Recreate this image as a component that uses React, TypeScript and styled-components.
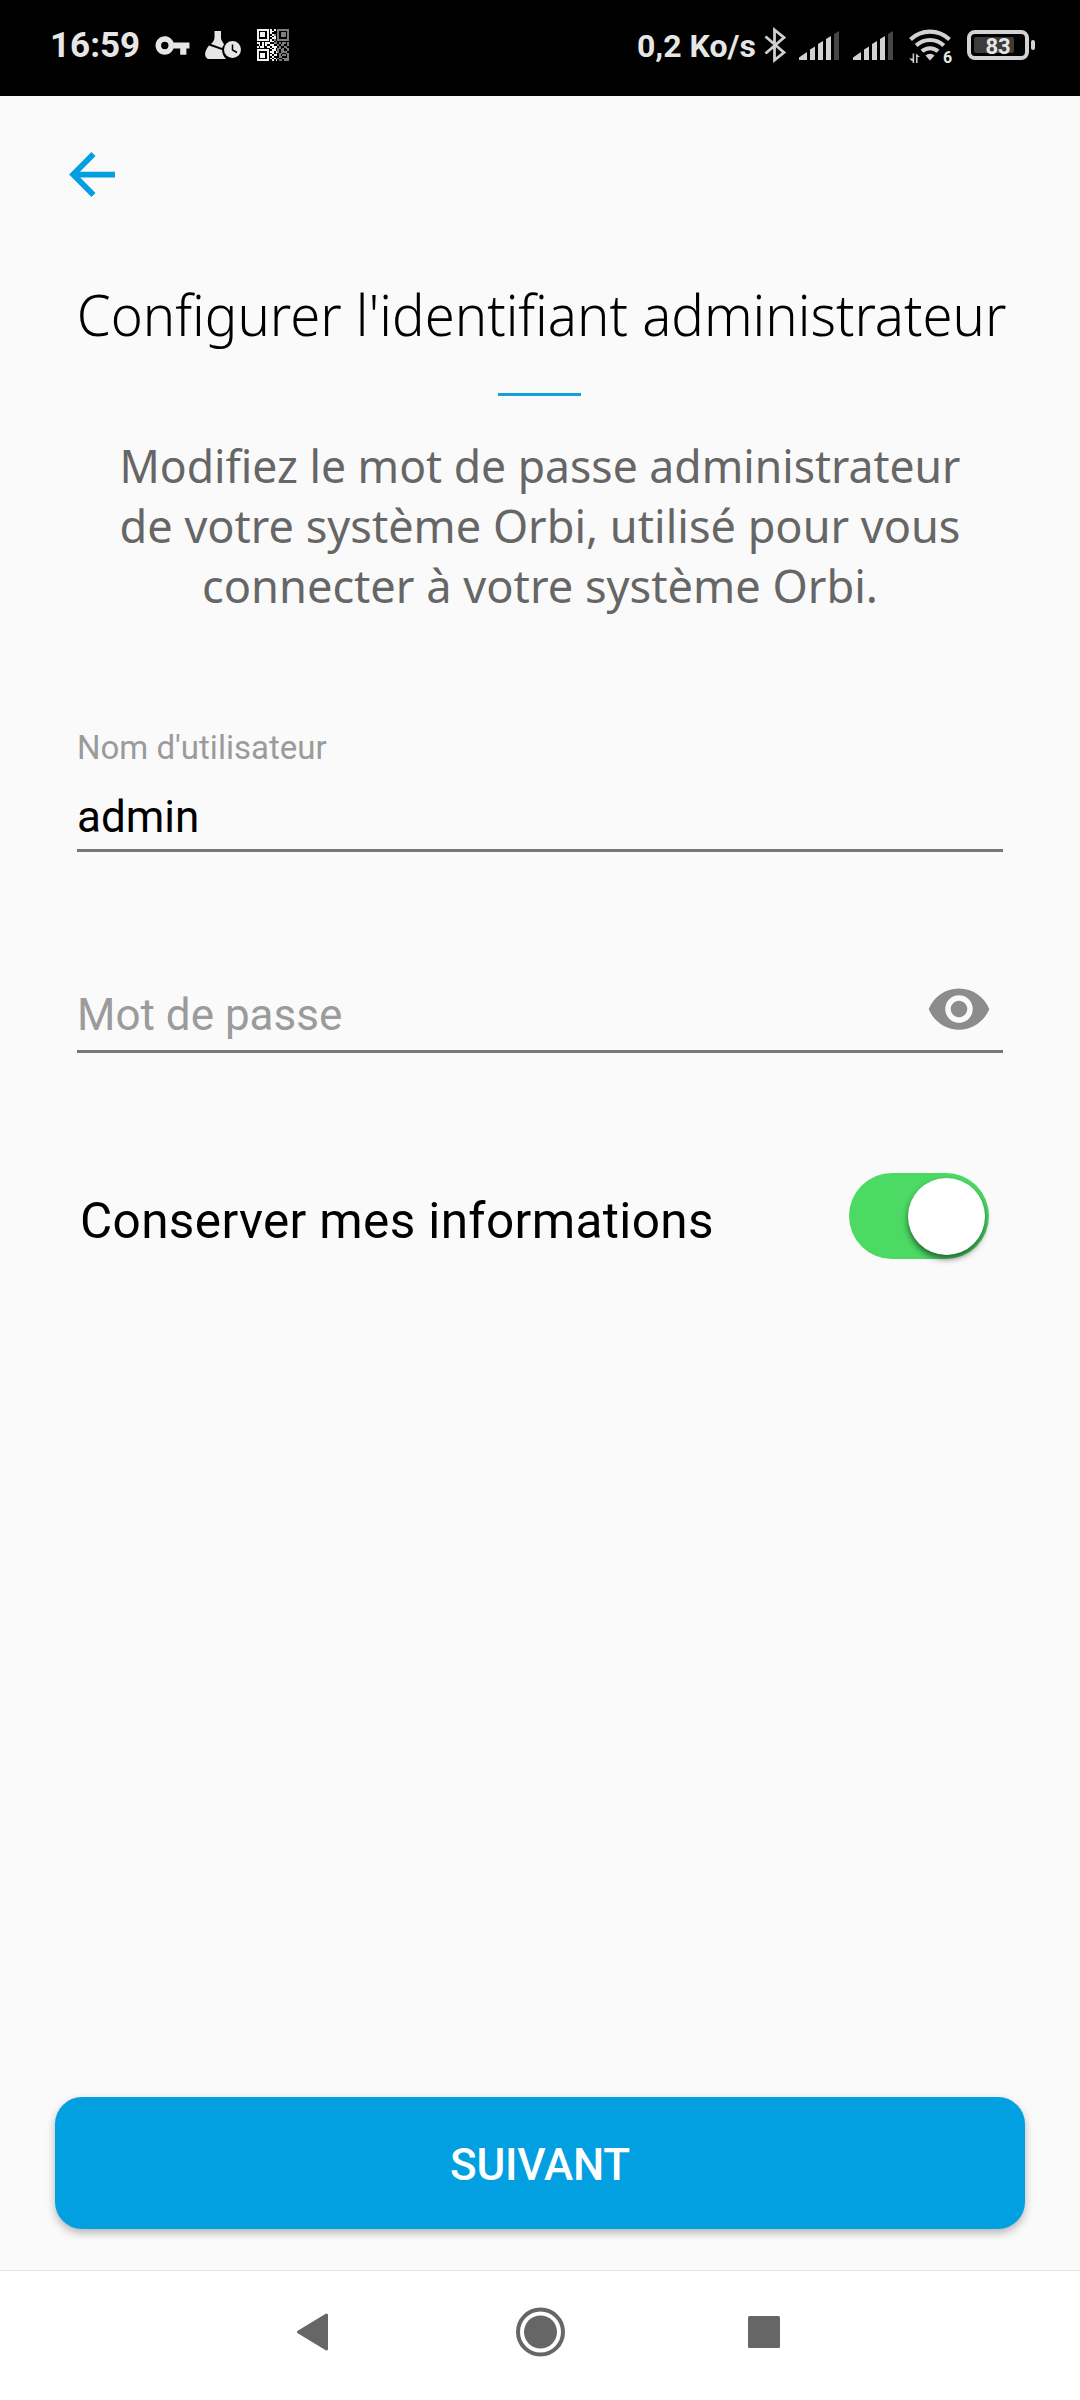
import React, { useState } from "react";
import styled, { createGlobalStyle } from "styled-components";

const Global = createGlobalStyle`
  * { box-sizing: border-box; }
  body { margin: 0; background: #fafafa; }
`;

const Screen = styled.div`
  width: 1080px;
  height: 2400px;
  display: flex;
  flex-direction: column;
  background: #fafafa;
  font-family: Roboto, sans-serif;
  overflow: hidden;
`;

const StatusBar = styled.header`
  height: 96px;
  flex: none;
  padding: 0 45px 6px 50px;
  background: #000;
  color: #e6e6e6;
  display: flex;
  align-items: center;
  justify-content: space-between;
`;

const StatusGroup = styled.div`
  display: flex;
  align-items: center;
`;

const StatusText = styled.span<{ $size: number; $width: number }>`
  font-size: ${(p) => p.$size}px;
  width: ${(p) => p.$width}px;
  font-weight: 700;
  line-height: 40px;
  white-space: nowrap;
  padding-top: 2px;
`;

const Glyph = styled.svg<{ $gap?: number }>`
  display: block;
  flex: none;
  overflow: visible;
  margin-left: ${(p) => p.$gap ?? 0}px;
`;

const Page = styled.main`
  flex: 1;
  display: flex;
  flex-direction: column;
  padding: 56px 55px 41px;
`;

const BackButton = styled.button`
  border: 0;
  padding: 0;
  margin-left: 14px;
  width: 46px;
  height: 46px;
  background: none;
`;

const Title = styled.h1`
  margin: 76px 0 0;
  height: 80px;
  font: 300 57px/80px "Noto Sans", sans-serif;
  color: #000;
  text-align: center;
  white-space: nowrap;
  transform: scaleX(0.955);
`;

const Rule = styled.hr`
  width: 83px;
  height: 3px;
  border: 0;
  margin: 39px 0 0 443px;
  background: #149fd8;
`;

const Description = styled.p`
  margin: 39px 0 0;
  font: 400 46px/60px "Noto Sans", sans-serif;
  color: #666;
  text-align: center;
  white-space: nowrap;
`;

const Line = styled.span<{ $stretch: number }>`
  display: block;
  transform: scaleX(${(p) => p.$stretch});
`;

const Field = styled.label<{ $top: number; $height: number }>`
  display: flex;
  flex-direction: column;
  justify-content: flex-end;
  height: ${(p) => p.$height}px;
  margin: ${(p) => p.$top}px 22px 0;
  border-bottom: 3px solid #777;
`;

const FieldLabel = styled.span`
  margin-bottom: 17px;
  font-size: 33px;
  line-height: 40px;
  color: #9b9b9b;
`;

const FieldRow = styled.div<{ $height: number; $inset?: number }>`
  display: flex;
  align-items: flex-start;
  flex: none;
  height: ${(p) => p.$height}px;
  padding-right: 11px;
  & > input { margin-top: ${(p) => p.$inset ?? 0}px; }
`;

const Input = styled.input`
  flex: 1;
  min-width: 0;
  height: 64px;
  padding: 0;
  border: 0;
  outline: 0;
  background: none;
  font: 400 44px/64px Roboto, sans-serif;
  color: #000;
  &::placeholder { color: #9b9b9b; opacity: 1; }
`;

const RememberRow = styled.div`
  display: flex;
  align-items: center;
  justify-content: space-between;
  height: 86px;
  margin: 120px 36px 0 25px;
`;

const RememberText = styled.span`
  font-size: 49.5px;
  letter-spacing: 0.36px;
  line-height: 60px;
  padding-top: 10px;
  white-space: nowrap;
`;

const Track = styled.button<{ $on: boolean }>`
  display: flex;
  align-items: center;
  justify-content: ${(p) => (p.$on ? "flex-end" : "flex-start")};
  width: 140px;
  height: 86px;
  padding: 0 4px 0 5px;
  border: 0;
  border-radius: 43px;
  background: ${(p) => (p.$on ? "#4cd964" : "#ccc")};
`;

const Thumb = styled.span`
  width: 77px;
  height: 77px;
  border-radius: 50%;
  background: #fff;
  box-shadow: 0 4px 6px rgba(0, 0, 0, 0.55);
`;

const NextButton = styled.button`
  margin-top: auto;
  width: 970px;
  height: 132px;
  border: 0;
  border-radius: 27px;
  padding: 4px 0 0;
  background: #029fe1;
  box-shadow: 0 4px 9px rgba(0, 0, 0, 0.28);
  color: #fff;
  font: 500 44px/60px Roboto, sans-serif;
  letter-spacing: -0.2px;
`;

const NavBar = styled.nav`
  flex: none;
  height: 130px;
  border-top: 1px solid #e2e2e2;
  background: #fff;
  display: flex;
  align-items: center;
  justify-content: center;
  gap: 174px;
  padding: 0 0 7px;
`;

const QR = [
  "1111111.1.1.2222222",
  "1.....1.11..2.....2",
  "1.111.1.1...2.222.2",
  "1.111.1..12.2.222.2",
  "1.111.1.1.1.2.222.2",
  "1.....1..11.2.....2",
  "1111111.1.2.2222222",
  "........11.2.......",
  "11.1.111..22.2.22.2",
  ".1.1.1..11..2.22..2",
  "1.11..11.111.2..22.",
  "........1.1.22.2.22",
  "1111111..11.2.22..2",
  "1.....1.11.12.2222.",
  "1.111.1..1.2.22..22",
  "1.111.1.1.11.2.22.2",
  "1.111.1..1...22...2",
  "1.....1.1.1.2..2222",
  "1111111..1.1.22.222",
];

const KeyIcon = () => (
  <Glyph $gap={14} width="37" height="37" viewBox="0 0 24 24" fill="#e6e6e6">
    <path d="M12.65 10C11.83 7.67 9.61 6 7 6c-3.31 0-6 2.69-6 6s2.69 6 6 6c2.61 0 4.83-1.67 5.65-4H17v4h4v-4h2v-4H12.65zM7 14.4a2.4 2.4 0 1 1 0-4.8 2.4 2.4 0 0 1 0 4.8z" />
  </Glyph>
);

const ActivityIcon = () => (
  <Glyph $gap={14} width="36" height="28" viewBox="0 0 36 28" fill="#e6e6e6">
    <path d="M9.500 0h6.500v7c0 2.500 2 4 3 6.500l-2 3.500-11-4c2-2 3.500-4 3.500-6.500z" />
    <path d="M4 14.500l13 4.500c.3 3.500 1.500 6.500 4 9H3c-4-2.500-4-7 1-13.500z" />
    <circle cx="27.500" cy="18.500" r="8.500" />
    <path d="M27.500 13.500v5.500l4.500 2.500" fill="none" stroke="#000" strokeWidth="1.500" />
  </Glyph>
);

const QrIcon = () => (
  <Glyph $gap={16} width="32" height="32" viewBox="0 0 19 19" shapeRendering="crispEdges">
    {QR.map((row, y) =>
      [...row].map((c, x) =>
        c === "." ? null : (
          <rect key={`${x}-${y}`} x={x} y={y} width="1" height="1" fill={c === "1" ? "#f2f2f2" : "#7d7d7d"} />
        )
      )
    )}
  </Glyph>
);

const BluetoothIcon = () => (
  <Glyph $gap={7} width="22" height="36" viewBox="0 0 22 36" fill="none" stroke="#cfcfcf" strokeWidth="2.800">
    <path d="M1.500 9.500L20 25.500l-9.500 7.500V3L20 10.500 1.500 26.500" />
  </Glyph>
);

const SignalIcon = ({ gap }: { gap: number }) => (
  <Glyph $gap={gap} width="40" height="29" viewBox="0 0 40 29" fill="#d2d2d2">
    <path d="M0 29v-2.500L8 21v8z" />
    <path d="M11 29V18.500l5-3V29z" />
    <path d="M19 29V13l5-3V29z" />
    <path d="M27 29V8l5-3V29z" />
    <path d="M35 29V3l5-3V29z" fill="#464646" />
  </Glyph>
);

const WifiIcon = () => (
  <Glyph $gap={16} width="44" height="40" viewBox="0 -2 44 40">
    <g fill="none" stroke="#d2d2d2" strokeWidth="4.200">
      <path d="M1.500 12.500a28 28 0 0 1 39 0" />
      <path d="M7.200 18.500a20 20 0 0 1 27.600 0" />
      <path d="M13 24.300a12 12 0 0 1 16 0" />
    </g>
    <path d="M16.500 28.500a6.500 6.500 0 0 1 9 0L21 33.500z" fill="#d2d2d2" />
    <path d="M3.600 26.500v9.500h1.600v-9.500zM7 26.500v9.500h1.600v-6H11l-4-3.500zM0 31.500h3.600v3z" fill="#c8c8c8" />
    <text x="34" y="35.500" fontFamily="Roboto" fontWeight="700" fontSize="16" fill="#e6e6e6">6</text>
  </Glyph>
);

const BatteryIcon = () => (
  <Glyph $gap={14} width="68" height="30" viewBox="0 0 68 30">
    <rect x="2" y="2" width="58" height="26" rx="6" fill="none" stroke="#d2d2d2" strokeWidth="4" />
    <rect x="7" y="7" width="40" height="16" rx="2" fill="#3c3c3c" />
    <rect x="64" y="10" width="4" height="10" rx="2" fill="#d2d2d2" />
    <text x="31" y="24" textAnchor="middle" fontFamily="Roboto" fontWeight="700" fontSize="22" fill="#e6e6e6">83</text>
  </Glyph>
);

export default function App() {
  const [keep, setKeep] = useState(true);
  const [visible, setVisible] = useState(false);
  return (
    <Screen>
      <Global />
      <StatusBar>
        <StatusGroup>
          <StatusText $size={35} $width={90}>16:59</StatusText>
          <KeyIcon />
          <ActivityIcon />
          <QrIcon />
        </StatusGroup>
        <StatusGroup>
          <StatusText $size={32} $width={120}>0,2 Ko/s</StatusText>
          <BluetoothIcon />
          <SignalIcon gap={13} />
          <SignalIcon gap={14} />
          <WifiIcon />
          <BatteryIcon />
        </StatusGroup>
      </StatusBar>
      <Page>
        <BackButton aria-label="Retour">
          <Glyph width="46" height="46" viewBox="0 0 46 46" fill="none" stroke="#029fe1" strokeWidth="5.800">
            <path d="M24.500 2L4.200 22.500l20.300 20.500M5 22.700h41" />
          </Glyph>
        </BackButton>
        <Title>Configurer l'identifiant administrateur</Title>
        <Rule />
        <Description>
          <Line $stretch={0.967}>Modifiez le mot de passe administrateur</Line>
          <Line $stretch={0.98}>de votre système Orbi, utilisé pour vous</Line>
          <Line $stretch={0.982}>connecter à votre système Orbi.</Line>
        </Description>
        <Field $top={111} $height={126}>
          <FieldLabel>Nom d'utilisateur</FieldLabel>
          <FieldRow $height={64}>
            <Input defaultValue="admin" />
          </FieldRow>
        </Field>
        <Field $top={120} $height={81}>
          <FieldRow $height={74} $inset={7}>
            <Input type={visible ? "text" : "password"} placeholder="Mot de passe" />
            <Glyph width="66" height="66" viewBox="0 0 24 24" fill="#8c8c8c" onClick={() => setVisible(!visible)}>
              <path d="M12 4.500C7 4.500 2.730 7.610 1 12c1.730 4.390 6 7.500 11 7.500s9.270-3.110 11-7.500c-1.730-4.390-6-7.500-11-7.500zM12 17c-2.760 0-5-2.240-5-5s2.240-5 5-5 5 2.240 5 5-2.240 5-5 5zm0-8c-1.660 0-3 1.340-3 3s1.340 3 3 3 3-1.340 3-3-1.340-3-3-3z" />
            </Glyph>
          </FieldRow>
        </Field>
        <RememberRow>
          <RememberText>Conserver mes informations</RememberText>
          <Track $on={keep} role="switch" aria-checked={keep} onClick={() => setKeep(!keep)}>
            <Thumb />
          </Track>
        </RememberRow>
        <NextButton>SUIVANT</NextButton>
      </Page>
      <NavBar>
        <Glyph width="50" height="50" viewBox="0 0 50 50" fill="#666" stroke="#666" strokeWidth="3" strokeLinejoin="round">
          <path d="M7.500 25L35.500 8v34z" />
        </Glyph>
        <Glyph width="50" height="50" viewBox="0 0 50 50">
          <circle cx="25.500" cy="25" r="22.500" fill="none" stroke="#666" strokeWidth="4" />
          <circle cx="25.500" cy="25" r="16.500" fill="#666" />
        </Glyph>
        <Glyph width="50" height="50" viewBox="0 0 50 50">
          <rect x="9" y="9" width="32" height="32" rx="1.500" fill="#666" />
        </Glyph>
      </NavBar>
    </Screen>
  );
}
